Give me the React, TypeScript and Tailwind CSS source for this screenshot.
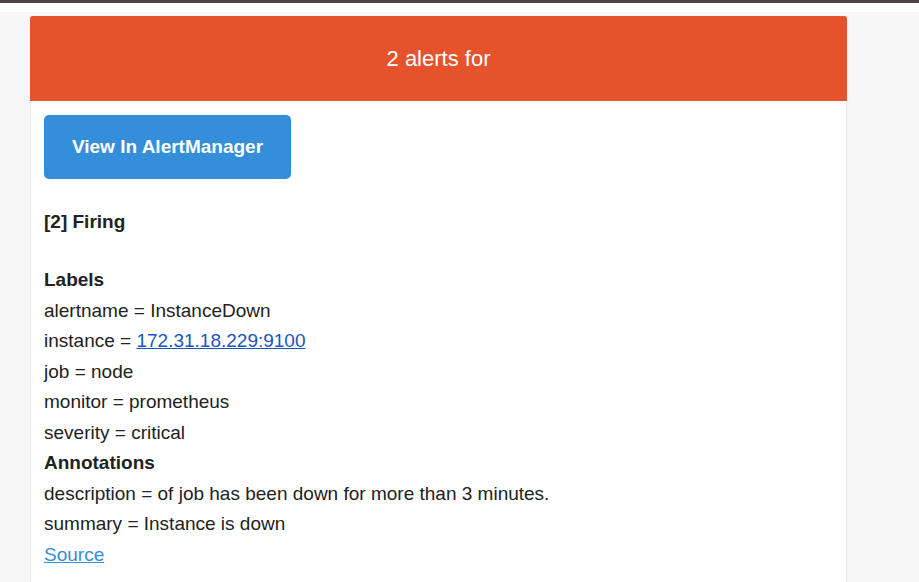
import React from "react";

export default function App() {
  const labels = [
    ["alertname", "InstanceDown"],
    ["instance", null],
    ["job", "node"],
    ["monitor", "prometheus"],
    ["severity", "critical"],
  ];
  return (
    <div
      className="w-[919px] h-[582px] overflow-hidden bg-[#f6f6f6] text-[#222222]"
      style={{ fontFamily: '"Liberation Sans", Arial, Helvetica, sans-serif' }}
    >
      <div className="h-[3px] bg-[#4a4648]" />
      <div className="h-[9px] bg-white" />
      <div className="ml-[30px] mt-[4px] w-[817px] h-[600px] bg-white border-r border-l border-[#e9e9e9] rounded-t-[3px]">
        <div className="h-[85px] bg-[#e6522c] rounded-t-[3px] flex items-center justify-center text-white text-[22px] -mx-px">
          2 alerts for
        </div>
        <div className="pl-[13px]">
          <a className="mt-[14px] w-[247px] h-[64px] rounded-[5px] bg-[#348eda] text-white font-bold text-[19px] flex items-center justify-center">
            View In AlertManager
          </a>
          <div className="mt-[28px] text-[19px] leading-[30.5px] font-bold">[2] Firing</div>
          <div className="mt-[27.5px] text-[19px] leading-[30.5px]">
            <div className="font-bold">Labels</div>
            {labels.map(([k, v]) => (
              <div key={k}>
                {k} ={" "}
                {v === null ? (
                  <a className="text-[#1a55c4] underline">172.31.18.229:9100</a>
                ) : (
                  v
                )}
              </div>
            ))}
            <div className="font-bold">Annotations</div>
            <div>description = of job has been down for more than 3 minutes.</div>
            <div>summary = Instance is down</div>
            <a className="text-[#348eda] underline">Source</a>
          </div>
        </div>
      </div>
    </div>
  );
}
